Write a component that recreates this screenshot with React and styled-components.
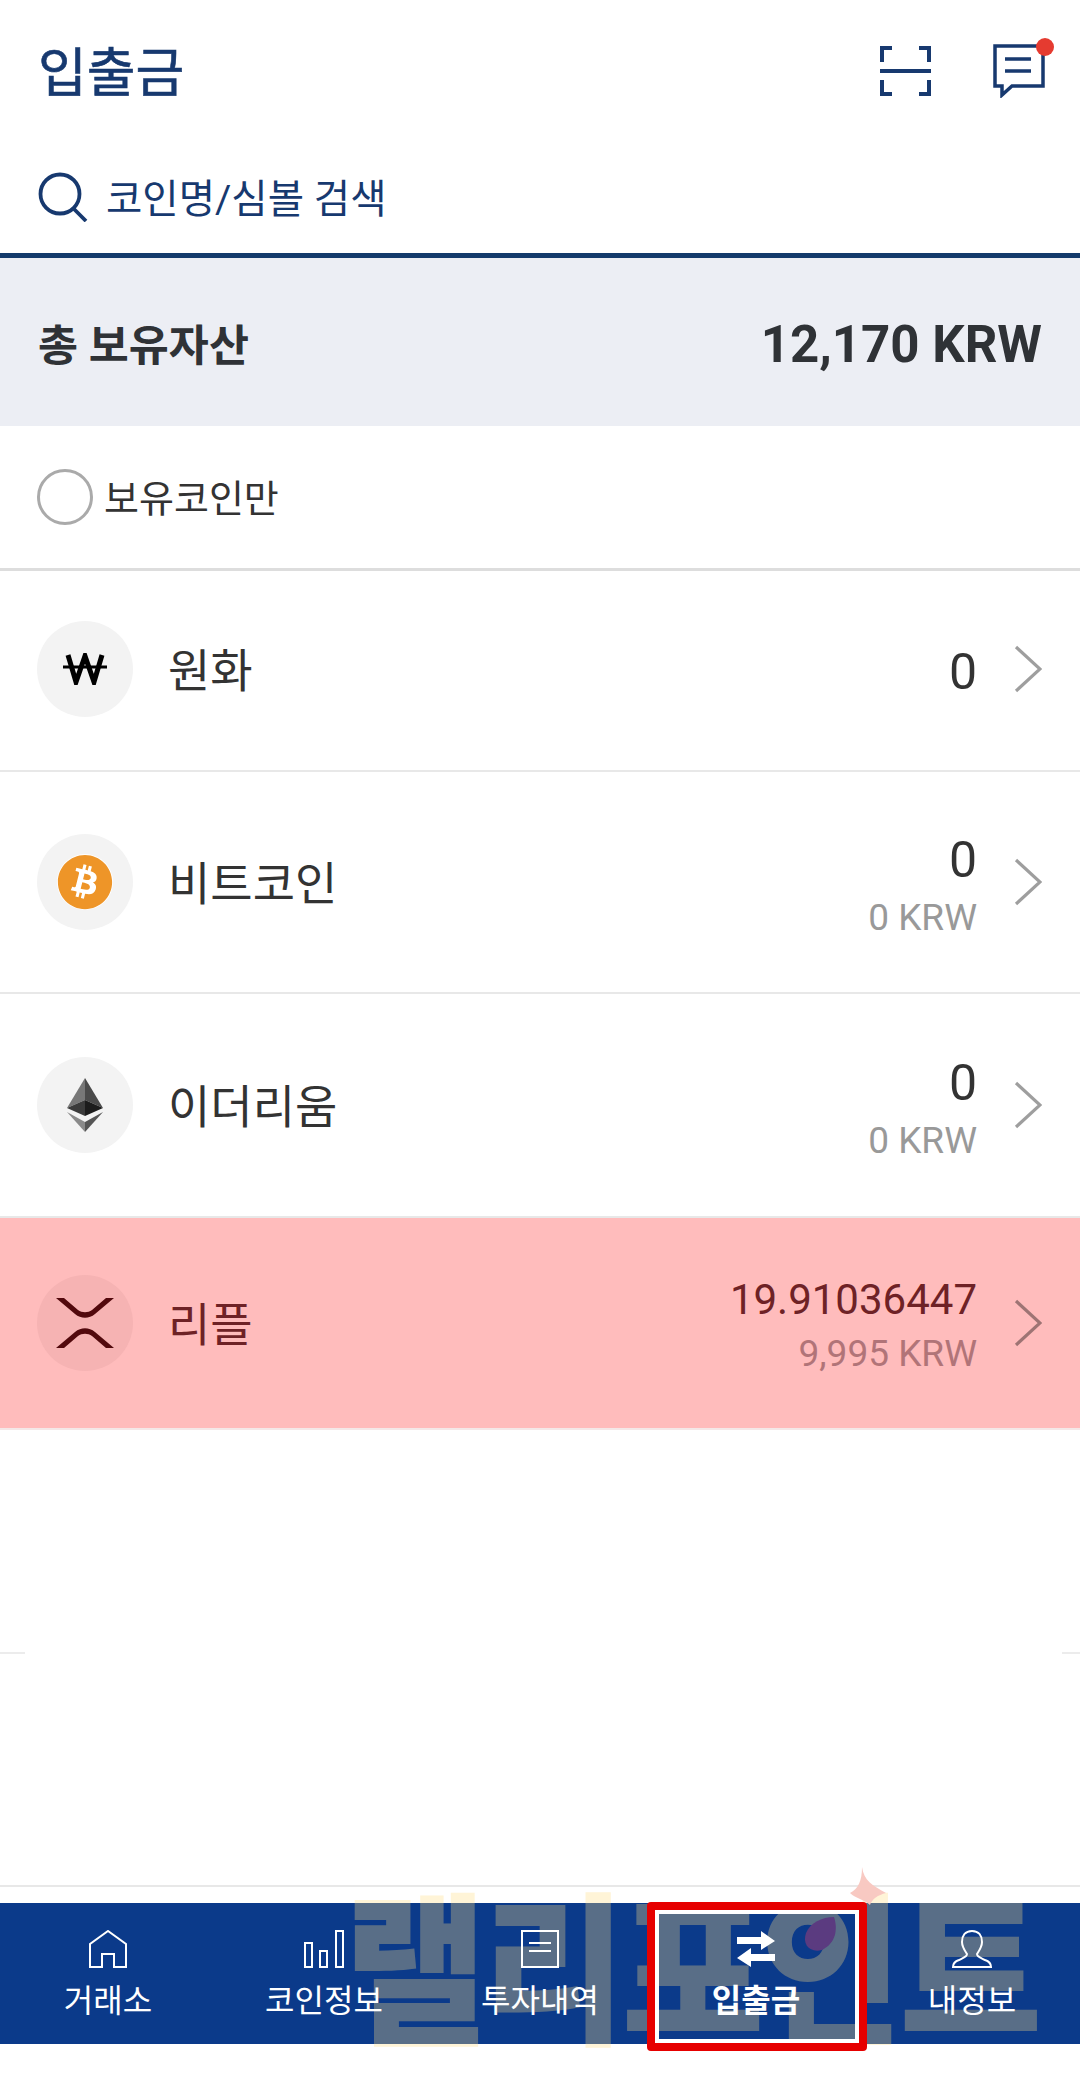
import React from 'react';
import styled, { createGlobalStyle } from 'styled-components';
import { FaBitcoin } from 'react-icons/fa';

const GlobalStyle = createGlobalStyle`
  html, body {
    margin: 0;
    padding: 0;
    background: #fff;
  }
  body {
    font-family: Roboto, "Noto Sans CJK KR", sans-serif;
    color: #333;
  }
`;

const Page = styled.div`
  width: 1080px;
  height: 2080px;
  background: #fff;
  display: flex;
  flex-direction: column;
  overflow: hidden;
`;

const Header = styled.header`
  height: 253px;
  border-bottom: 5px solid #133a6b;
  padding: 0 35px 0 38px;
  display: flex;
  flex-direction: column;
`;

const TitleRow = styled.div`
  height: 142px;
  display: flex;
  align-items: center;
  justify-content: space-between;
`;

const Title = styled.h1`
  margin: 0;
  padding-bottom: 4px;
  font-size: 53px;
  font-weight: 400;
  -webkit-text-stroke: 0.6px #17396f;
  color: #17396f;
`;

const Actions = styled.div`
  display: flex;
  align-items: center;
  gap: 62px;
`;

const MessageWrap = styled.div`
  position: relative;
  height: 54px;
  display: flex;
`;

const Dot = styled.span`
  position: absolute;
  top: -6px;
  right: -9px;
  width: 18px;
  height: 18px;
  border-radius: 50%;
  background: #e53b30;
`;

const SearchRow = styled.div`
  display: flex;
  align-items: center;
  gap: 18px;
  height: 110px;
`;

const SearchText = styled.span`
  padding-bottom: 4px;
  font-size: 39.5px;
  color: #17396f;
`;

const Total = styled.section`
  height: 168px;
  background: #eceef4;
  padding: 0 38px;
  display: flex;
  align-items: center;
  justify-content: space-between;
`;

const TotalLabel = styled.span`
  font-size: 43.5px;
  font-weight: 700;
  color: #2f3236;
`;

const TotalValue = styled.span`
  padding-top: 5px;
  font-size: 51px;
  font-weight: 700;
  color: #2f3236;
`;

const Filter = styled.label`
  height: 142px;
  border-bottom: 3px solid #ddd;
  padding: 0 38px 0 37px;
  display: flex;
  align-items: center;
  gap: 11px;
`;

const Radio = styled.span`
  width: 56px;
  height: 56px;
  box-sizing: border-box;
  border: 3px solid #aaa;
  border-radius: 50%;
`;

const FilterText = styled.span`
  padding-bottom: 3px;
  font-size: 38px;
  color: #333;
`;

const Row = styled.div`
  height: ${props => props.$height}px;
  box-sizing: border-box;
  border-bottom: 2px solid ${props => props.$active ? '#f4e8e8' : '#e8e8e8'};
  background: ${props => props.$active ? '#ffbcbc' : '#fff'};
  padding: 0 38px ${props => props.$lift}px 37px;
  display: flex;
  align-items: center;
`;

const CoinIcon = styled.div`
  width: 96px;
  height: 96px;
  flex: none;
  border-radius: 50%;
  background: ${props => props.$active ? '#f6b3b3' : '#f3f3f3'};
  display: flex;
  align-items: center;
  justify-content: center;
`;

const BitcoinBadge = styled.div`
  width: 56px;
  height: 56px;
  border-radius: 50%;
  background: #fff;
  display: flex;
  color: #ee9528;
`;

const CoinName = styled.span`
  margin-left: 35px;
  padding-bottom: 4px;
  font-size: 46px;
  color: ${props => props.$active ? '#6e2226' : '#333'};
`;

const Values = styled.div`
  margin-left: auto;
  padding-top: ${props => props.$offset}px;
  display: flex;
  flex-direction: column;
  align-items: flex-end;
`;

const Amount = styled.span`
  font-size: ${props => props.$small ? 42 : 50}px;
  line-height: ${props => props.$small ? 54 : 60}px;
  color: ${props => props.$active ? '#6e2226' : '#333'};
`;

const Worth = styled.span`
  font-size: 37px;
  line-height: ${props => props.$active ? 54 : 56}px;
  color: ${props => props.$active ? '#b17478' : '#999'};
`;

const ChevronBox = styled.div`
  margin-left: 37px;
  display: flex;
`;

const Blank = styled.div`
  height: 457px;
  padding-top: 222px;
  box-sizing: border-box;
  border-bottom: 2px solid #e8e8e8;
  display: flex;
  justify-content: space-between;
`;

const Tick = styled.span`
  width: ${props => props.$width}px;
  height: 2px;
  background: #ececec;
`;

const Gap = styled.div`
  height: 16px;
`;

const Nav = styled.nav`
  position: relative;
  height: 141px;
  background: #0b3a8a;
  display: grid;
  grid-template-columns: repeat(5, 216px);
`;

const NavItem = styled.div`
  position: relative;
  display: flex;
  flex-direction: column;
  align-items: center;
  padding-top: 27px;
  color: #fff;
`;

const NavIcon = styled.div`
  height: 38px;
  display: flex;
  align-items: center;
`;

const NavLabel = styled.span`
  margin-top: 13px;
  line-height: 40px;
  font-size: 32px;
  font-weight: ${props => props.$active ? 700 : 400};
`;

// 캡처 위에 덧씌워진 워터마크
const Watermark = styled.div`
  position: absolute;
  left: 344px;
  top: -32px;
  font-size: 146px;
  line-height: 210px;
  font-weight: 900;
  white-space: nowrap;
  color: rgba(255, 220, 130, 0.32);
  letter-spacing: -4px;
  transform: scale(1.065, 1.12);
  transform-origin: left center;
  pointer-events: none;
`;

const WatermarkMark = styled.svg`
  position: absolute;
  left: 800px;
  top: -36px;
  pointer-events: none;
`;

// 입출금 탭 강조 표시
const Highlight = styled.div`
  position: absolute;
  left: -1px;
  top: -1px;
  width: 220px;
  height: 149px;
  box-sizing: border-box;
  border: 8px solid #e60000;
  border-radius: 4px;
  pointer-events: none;
  &::after {
    content: '';
    position: absolute;
    inset: 0;
    border: 4px solid #fff;
  }
`;

const ScanIcon = () => (
  <svg width="51" height="52" viewBox="0 0 51 52" fill="none" stroke="#17396f" strokeWidth="4">
    <path d="M12 3H2v14M39 3h10v14M2 35v14h10M49 35v14H39" />
    <path d="M0 26h51" />
  </svg>
);

const MessageIcon = () => (
  <svg width="52" height="54" viewBox="0 0 52 54" fill="none" stroke="#17396f" strokeWidth="3.5">
    <path d="M2 2h48v40H19L9 51V42H2z" />
    <path d="M12 15h26M12 27h26" />
  </svg>
);

const SearchIcon = () => (
  <svg width="50" height="50" viewBox="0 0 50 50" fill="none" stroke="#17396f" strokeWidth="3.8">
    <circle cx="22" cy="22" r="19.5" />
    <path d="M35 36l13 13" />
  </svg>
);

const WonIcon = () => (
  <svg width="44" height="32" viewBox="0 0 44 32" fill="none" stroke="#000">
    <path d="M5 2l8 27L22 3l9 26 8-27" strokeWidth="5" />
    <path d="M0 14h44" strokeWidth="3" />
  </svg>
);

const EthIcon = () => (
  <svg width="36" height="54" viewBox="0 0 36 54">
    <path d="M18 0L0 30l18-8z" fill="#777" />
    <path d="M18 0l18 30-18-8z" fill="#4a4a4a" />
    <path d="M0 30l18-8v16z" fill="#3b3b3b" />
    <path d="M36 30l-18-8v16z" fill="#1c1c1c" />
    <path d="M0 34l18 10v10z" fill="#8a8a8a" />
    <path d="M36 34L18 44v10z" fill="#555" />
  </svg>
);

const XrpIcon = () => (
  <svg width="58" height="50" viewBox="0 0 58 50" fill="#52090d">
    <path d="M0 0h8l14 12c4 3 10 3 14 0L50 0h8L39 16c-6 5-14 5-20 0z" />
    <path d="M0 50h8l14-12c4-3 10-3 14 0l14 12h8L39 34c-6-5-14-5-20 0z" />
  </svg>
);

const Chevron = () => (
  <svg width="28" height="48" viewBox="0 0 28 48" fill="none" stroke="#000" strokeOpacity="0.38" strokeWidth="3.2">
    <path d="M2 2l24 22L2 46" />
  </svg>
);

const HomeIcon = () => (
  <svg width="40" height="38" viewBox="0 0 40 38" fill="none" stroke="#fff" strokeWidth="2">
    <path d="M2 37V14L20 1l18 13v23H26V24H14v13z" />
  </svg>
);

const ChartIcon = () => (
  <svg width="40" height="38" viewBox="0 0 40 38" fill="none" stroke="#fff" strokeWidth="2">
    <path d="M1 13h7v24H1zM16 21h7v16h-7zM32 1h7v36h-7z" />
  </svg>
);

const DocIcon = () => (
  <svg width="38" height="38" viewBox="0 0 38 38" fill="none" stroke="#fff" strokeWidth="2">
    <path d="M1 1h36v36H1zM8 13h22M8 21h22" />
  </svg>
);

const ArrowsIcon = () => (
  <svg width="38" height="36" viewBox="0 0 38 36" fill="#fff">
    <path d="M0 6h24V0l14 10-14 9v-6H0zM38 23H14v-6L0 27l14 9v-6h24z" />
  </svg>
);

const PersonIcon = () => (
  <svg width="40" height="38" viewBox="0 0 40 38" fill="none" stroke="#fff" strokeWidth="2">
    <path d="M20 1c-7 0-10 5-10 11 0 5 3 9 5 12 0 3-4 4-8 6-3 1-6 3-6 7h38c0-4-3-6-6-7-4-2-8-3-8-6 2-3 5-7 5-12 0-6-3-11-10-11z" />
  </svg>
);

const coins = [
  { name: '원화', amount: '0', height: 201, lift: 3, offset: 5, icon: <WonIcon /> },
  {
    name: '비트코인',
    amount: '0',
    worth: '0 KRW',
    height: 222,
    lift: 0,
    offset: 12,
    icon: <BitcoinBadge><FaBitcoin size={56} /></BitcoinBadge>,
  },
  { name: '이더리움', amount: '0', worth: '0 KRW', height: 224, lift: 0, offset: 12, icon: <EthIcon /> },
  { name: '리플', amount: '19.91036447', worth: '9,995 KRW', height: 212, lift: 0, offset: 8, icon: <XrpIcon />, active: true },
];

const tabs = [
  { label: '거래소', icon: <HomeIcon /> },
  { label: '코인정보', icon: <ChartIcon /> },
  { label: '투자내역', icon: <DocIcon /> },
  { label: '입출금', icon: <ArrowsIcon />, active: true },
  { label: '내정보', icon: <PersonIcon /> },
];

export default function App() {
  return (
    <Page>
      <GlobalStyle />
      <Header>
        <TitleRow>
          <Title>입출금</Title>
          <Actions>
            <ScanIcon />
            <MessageWrap>
              <MessageIcon />
              <Dot />
            </MessageWrap>
          </Actions>
        </TitleRow>
        <SearchRow>
          <SearchIcon />
          <SearchText>코인명/심볼 검색</SearchText>
        </SearchRow>
      </Header>

      <Total>
        <TotalLabel>총 보유자산</TotalLabel>
        <TotalValue>12,170 KRW</TotalValue>
      </Total>

      <Filter>
        <Radio />
        <FilterText>보유코인만</FilterText>
      </Filter>

      {coins.map(coin => (
        <Row key={coin.name} $height={coin.height} $lift={coin.lift} $active={coin.active}>
          <CoinIcon $active={coin.active}>{coin.icon}</CoinIcon>
          <CoinName $active={coin.active}>{coin.name}</CoinName>
          <Values $offset={coin.offset}>
            <Amount $small={coin.active} $active={coin.active}>{coin.amount}</Amount>
            {coin.worth && <Worth $active={coin.active}>{coin.worth}</Worth>}
          </Values>
          <ChevronBox><Chevron /></ChevronBox>
        </Row>
      ))}

      <Blank>
        <Tick $width={25} />
        <Tick $width={18} />
      </Blank>
      <Gap />

      <Nav>
        <Watermark>랠리포인트</Watermark>
        <WatermarkMark width="90" height="90" viewBox="0 0 90 90">
          <path d="M62 0c2 14 10 18 24 26-8 2-14 6-16 12-6-6-14-6-20-12 8-4 12-12 12-26z" fill="#f8c9c2" />
          <path d="M34 50c4 12 2 26-12 33C10 86 2 78 6 66c4-10 16-16 28-16z" fill="#5b3b80" />
        </WatermarkMark>
        {tabs.map(tab => (
          <NavItem key={tab.label}>
            <NavIcon>{tab.icon}</NavIcon>
            <NavLabel $active={tab.active}>{tab.label}</NavLabel>
            {tab.active && <Highlight />}
          </NavItem>
        ))}
      </Nav>
    </Page>
  );
}
